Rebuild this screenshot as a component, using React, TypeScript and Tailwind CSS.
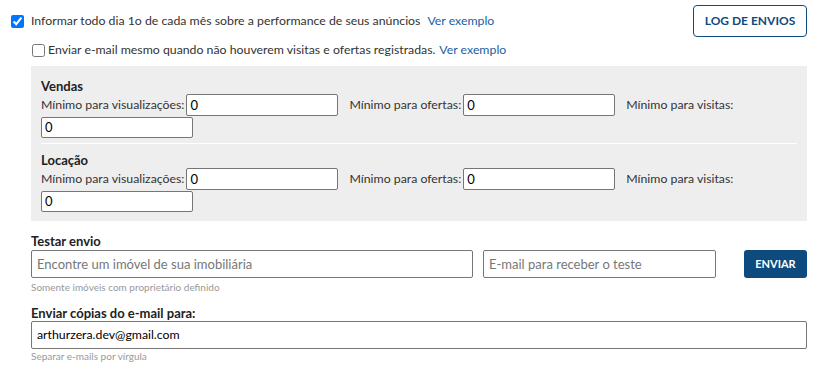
import React from 'react';

const font = { fontFamily: 'Lato, "Noto Sans", sans-serif' };

const MinRow: React.FC = () => (
  <div className="flex flex-wrap items-center text-[12.3px] text-[#333]">
    <label className="flex items-center">
      Mínimo para visualizações:
      <input
        defaultValue="0"
        className="ml-[2px] h-[22px] w-[152px] rounded-[2px] border border-[#767676] bg-white px-[3px] text-[13px] text-black outline-none"
      />
    </label>
    <label className="ml-[11px] flex items-center">
      Mínimo para ofertas:
      <input
        defaultValue="0"
        className="ml-[2px] h-[22px] w-[152px] rounded-[2px] border border-[#767676] bg-white px-[3px] text-[13px] text-black outline-none"
      />
    </label>
    <label className="ml-[11px] flex items-center">Mínimo para visitas:</label>
    <input
      defaultValue="0"
      className="mt-[1px] h-[21px] w-[152px] rounded-[2px] border border-[#767676] bg-white px-[3px] text-[13px] text-black outline-none"
    />
  </div>
);

export default function App() {
  return (
    <div style={font} className="w-[840px] h-[380px] bg-white text-[12.3px] text-[#333]">
      <div className="flex pl-[11px] pr-[33px] pt-[5px]">
        <div className="flex-1">
          <div className="flex items-center pt-[7px]">
            <input type="checkbox" defaultChecked className="m-0 h-[13px] w-[13px]" />
            <span className="ml-[7px]">Informar todo dia 1o de cada mês sobre a performance de seus anúncios</span>
            <a className="ml-[7px] text-[#1a5fa0]">Ver exemplo</a>
          </div>
          <div className="mt-[11px] flex items-center pl-[21px]">
            <input type="checkbox" className="m-0 h-[13px] w-[13px]" />
            <span className="ml-[3px]">Enviar e-mail mesmo quando não houverem visitas e ofertas registradas.</span>
            <a className="ml-[4px] text-[#1a5fa0]">Ver exemplo</a>
          </div>
        </div>
        <button className="h-[32px] w-[114px] rounded-[4px] border border-[#0d4a7e] text-[12px] font-bold text-[#0d4a7e]">
          LOG DE ENVIOS
        </button>
      </div>

      <div className="ml-[31px] mr-[33px] mt-[6px] bg-[#eeeeee] px-[10px] pt-[12px] pb-[9px]">
        <div className="font-bold text-[13px] leading-[16px] text-[#222]">Vendas</div>
        <MinRow />
        <div className="mt-[5px] mb-[8px] h-px bg-white" />
        <div className="font-bold text-[13px] leading-[16px] text-[#222]">Locação</div>
        <MinRow />
      </div>

      <div className="ml-[31px] mr-[33px] mt-[12px]">
        <div className="font-bold text-[13px] leading-[16px] text-[#222]">Testar envio</div>
        <div className="mt-[1px] flex items-center">
          <input
            placeholder="Encontre um imóvel de sua imobiliária"
            className="h-[28px] w-[442px] rounded-[2px] border border-[#767676] px-[5px] text-[13px] outline-none placeholder:text-[#777]"
          />
          <input
            placeholder="E-mail para receber o teste"
            className="ml-[10px] h-[28px] w-[233px] rounded-[2px] border border-[#767676] px-[5px] text-[13px] outline-none placeholder:text-[#777]"
          />
          <button className="ml-auto h-[28px] w-[63px] rounded-[3px] bg-[#0d4a7e] text-[11px] font-bold text-white">
            ENVIAR
          </button>
        </div>
        <div className="mt-[3px] text-[10px] leading-[13px] text-[#999]">Somente imóveis com proprietário definido</div>
        <div className="mt-[12px] font-bold text-[13px] leading-[15px] text-[#222]">Enviar cópias do e-mail para:</div>
        <input
          defaultValue="arthurzera.dev@gmail.com"
          className="block h-[28px] w-full rounded-[2px] border border-[#767676] px-[5px] text-[12.3px] text-black outline-none"
        />
        <div className="mt-[1px] text-[10px] leading-[13px] text-[#999]">Separar e-mails por vírgula</div>
      </div>
    </div>
  );
}
